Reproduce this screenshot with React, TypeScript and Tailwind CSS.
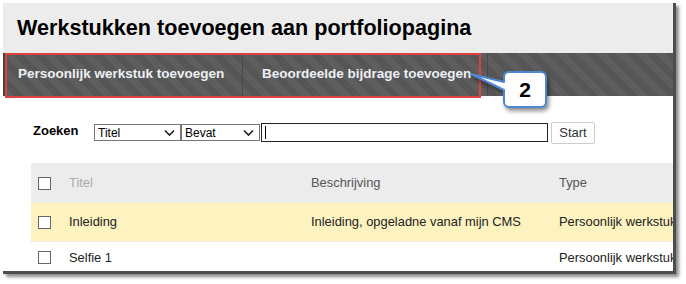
import React from 'react';

const rows = [
  { title: 'Inleiding', desc: 'Inleiding, opgeladne vanaf mijn CMS', type: 'Persoonlijk werkstuk', hl: true },
  { title: 'Selfie 1', desc: '', type: 'Persoonlijk werkstuk', hl: false },
];

function Chevron() {
  return (
    <svg width="11" height="8" viewBox="0 0 11 8" className="shrink-0">
      <path d="M1 1.5 L5.5 6 L10 1.5" fill="none" stroke="#222" strokeWidth="1.6" />
    </svg>
  );
}

function FakeSelect({ label, width }: { label: string; width: string }) {
  return (
    <div className={`${width} h-[17px] border border-[#767676] bg-white flex items-center justify-between pl-[3px] pr-[5px] text-[12px] text-black`}>
      <span>{label}</span>
      <Chevron />
    </div>
  );
}

function Box() {
  return <div className="w-[13px] h-[13px] border border-[#666] bg-white shrink-0" />;
}

export default function App() {
  return (
    <div className="w-[686px] h-[284px] bg-white relative overflow-hidden font-['Liberation_Sans',Arial,sans-serif]">
      {/* screenshot frame */}
      <div className="absolute left-[3px] top-[3px] w-[673px] h-[271px] overflow-hidden bg-white border-r-[3px] border-b-[3px] border-[#4d4d4d] shadow-[3px_3px_3px_rgba(0,0,0,0.45)]">
        <div className="h-[50px] bg-[#ececec] flex items-center pl-[14px]">
          <h1 className="text-[21.6px] font-bold text-black">Werkstukken toevoegen aan portfoliopagina</h1>
        </div>

        <div className="h-[43px] flex border-l-2 border-[#444] bg-[repeating-linear-gradient(45deg,#5e5e5e_0px,#5e5e5e_7px,#565656_7px,#565656_14px)]">
          <div className="w-[238px] flex items-center pl-[13px] text-[13.5px] font-bold text-[#ecf0f4] border-r border-[#4a4a4a]">
            Persoonlijk werkstuk toevoegen
          </div>
          <div className="w-[245px] flex items-center pl-[19px] text-[13.5px] font-bold text-[#ecf0f4] border-r border-[#4a4a4a]">
            Beoordeelde bijdrage toevoegen
          </div>
        </div>

        {/* search */}
        <div className="flex items-center mt-[25px] h-[23px]">
          <span className="ml-[30px] w-[61px] text-[13px] font-bold text-black -mt-[3px]">Zoeken</span>
          <FakeSelect label="Titel" width="w-[87px]" />
          <FakeSelect label="Bevat" width="w-[79px]" />
          <div className="ml-[1px] w-[287px] h-[19px] border-[1.5px] border-[#222] bg-white flex items-center pl-[3px]">
            <div className="w-px h-[13px] bg-black" />
          </div>
          <div className="ml-[3px] w-[44px] h-[22px] border border-[#ccc] rounded-[2px] bg-white flex items-center justify-center text-[13px] text-[#333]">
            Start
          </div>
        </div>

        {/* table */}
        <div className="ml-[28px] mt-[19px] w-[700px] text-[12.9px]">
          <div className="h-[40px] bg-[#ececec] flex items-center">
            <div className="w-[38px] pl-[7px]"><Box /></div>
            <div className="w-[242px] text-[#aaa]">Titel</div>
            <div className="w-[248px] text-[#555]">Beschrijving</div>
            <div className="text-[#555]">Type</div>
          </div>
          {rows.map((r) => (
            <div
              key={r.title}
              className={`flex items-center ${r.hl ? 'h-[39px] bg-[#fcf3c1] border-b border-[#ececec]' : 'h-[31px] bg-white'}`}
            >
              <div className="w-[38px] pl-[7px]"><Box /></div>
              <div className="w-[242px] text-[#222]">{r.title}</div>
              <div className="w-[248px] text-[#222]">{r.desc}</div>
              <div className="text-[#222] whitespace-nowrap">{r.type}</div>
            </div>
          ))}
        </div>
      </div>

      {/* red highlight */}
      <div className="absolute left-[5px] top-[53px] w-[476px] h-[45px] border-[2.5px] border-[#e0403f]" />

      {/* callout */}
      <svg className="absolute left-[460px] top-[62px] drop-shadow-[2px_3px_2px_rgba(0,0,0,0.45)]" width="96" height="56" viewBox="460 62 96 56">
        <path
          d="M508 72 H541 A5 5 0 0 1 546 77 V102 A5 5 0 0 1 541 107 H509 A5 5 0 0 1 504 102 V90 L471 74 L504 82 V77 A5 5 0 0 1 508 72 Z"
          fill="#fff"
          stroke="#4f87cf"
          strokeWidth="2"
          strokeLinejoin="round"
        />
      </svg>
      <div className="absolute left-[504px] top-[72px] w-[42px] h-[35px] flex items-center justify-center text-[21px] font-bold text-black">
        2
      </div>
    </div>
  );
}
